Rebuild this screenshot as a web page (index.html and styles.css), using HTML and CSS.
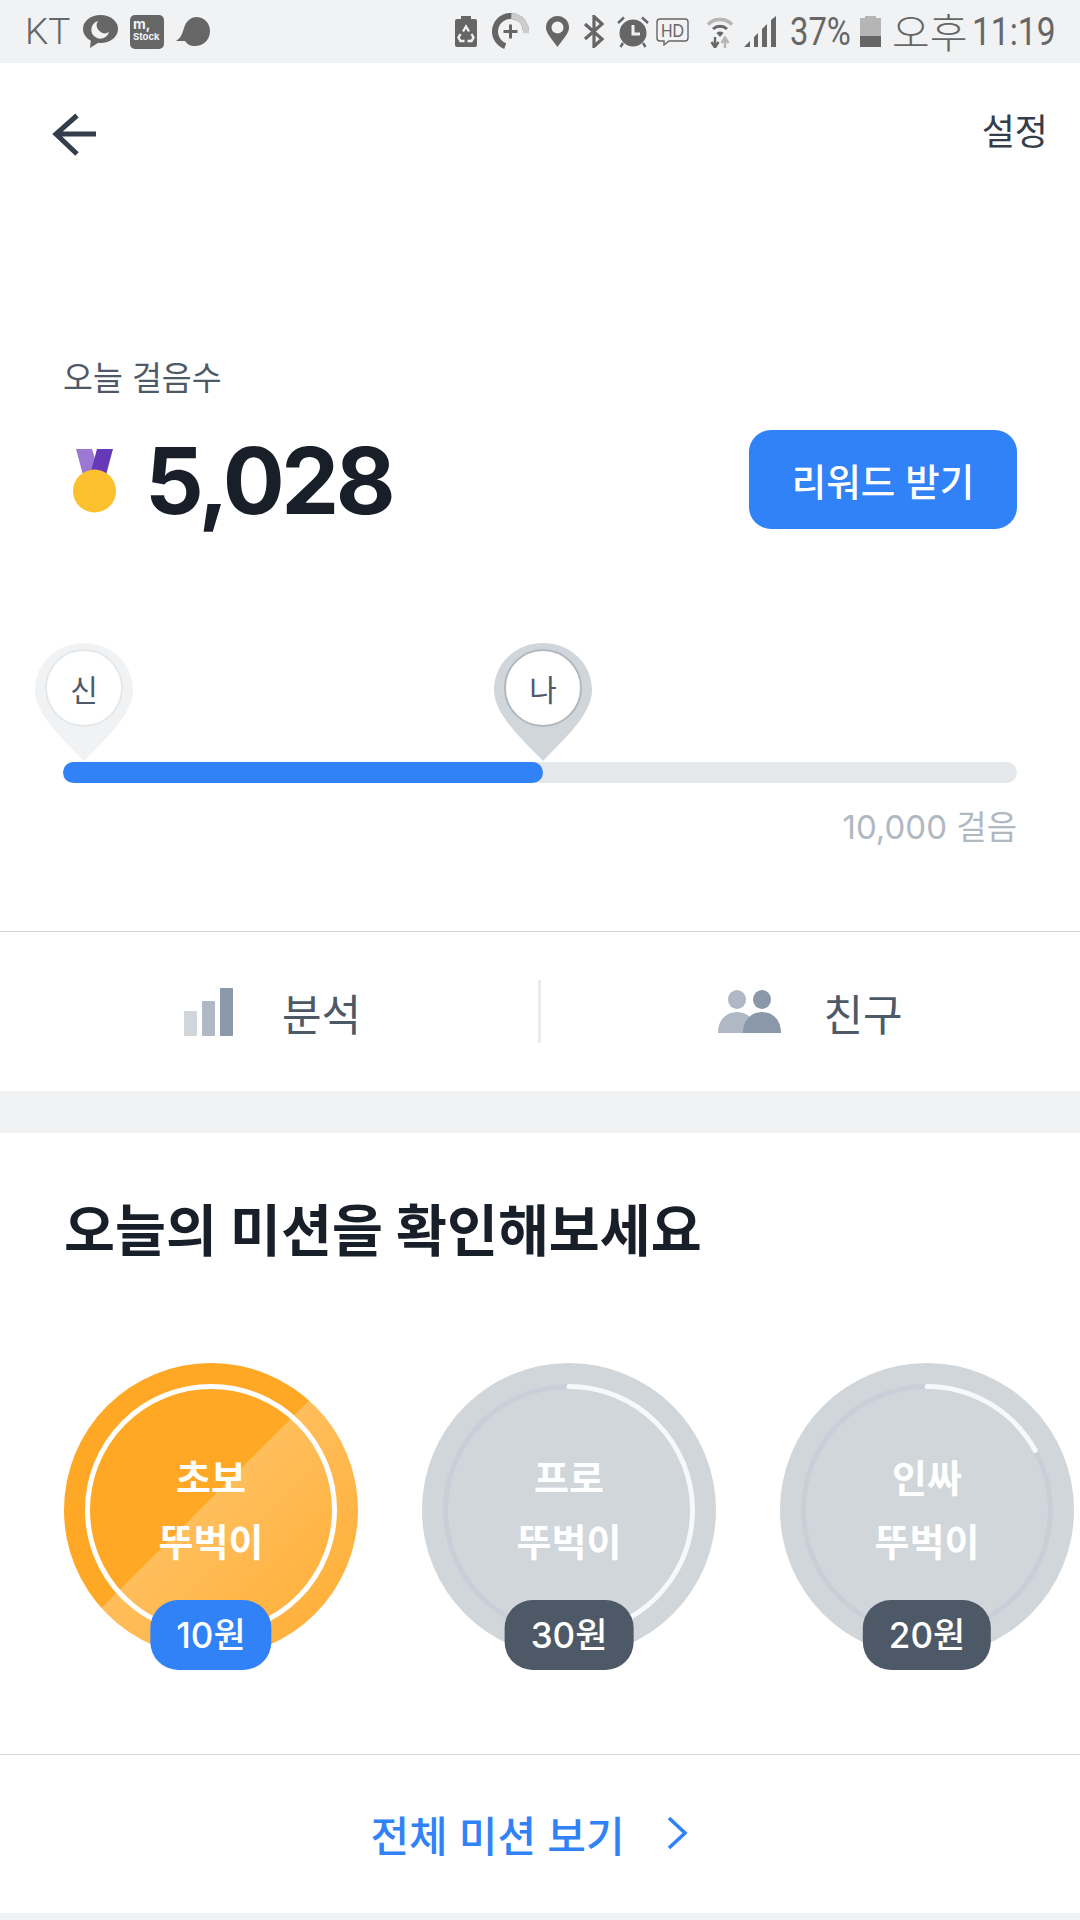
FILE: index.html
```html
<!DOCTYPE html>
<html lang='ko'>
<head>
  <meta charset='utf8'>
  <title>오늘 걸음수</title>
  <link rel="stylesheet" href="styles.css">
</head>
<body>
  <div class='status'>
    <div class='status-left'>
      <span class='carrier'>KT</span>
      <svg class='ico' width='35' height='33' viewBox='0 0 35 33'>
        <ellipse cx='17.5' cy='14' rx='17.5' ry='14' fill='#666'/>
        <path d='M8 24 L7 33 L18 26Z' fill='#666'/>
        <path d='M15 6 A9 9 0 1 0 26 17 A8 8 0 0 1 15 6Z' fill='#f1f2f4'/>
      </svg>
      <div class='mstock'><span class='mstock-m'>m,</span><span class='mstock-s'>Stock</span></div>
      <svg class='ico' width='34' height='29' viewBox='0 0 34 29'>
        <path d='M0 24 C5 21 6 17 8 11 C10 4 15 0 20 0 C28 0 34 6 34 14 C34 23 27 29 19 29 C14 29 11 27 9 24 C6 24 3 24 0 24Z' fill='#666'/>
      </svg>
    </div>
    <div class='status-right'>
      <svg class='ico' width='22' height='31' viewBox='0 0 22 31'>
        <path d='M6 0H16V3H20Q22 3 22 5V29Q22 31 20 31H2Q0 31 0 29V5Q0 3 2 3H6Z' fill='#666'/>
        <path d='M8 15.5L11 10.5L14 15.5M16.5 18L18.5 21.5L16.5 25H12.5M9.5 25H5.5L3.5 21.5L5.5 18' stroke='#f1f2f4' stroke-width='2.4' fill='none'/>
      </svg>
      <svg class='ico ico-plus' width='37' height='37' viewBox='0 0 37 37'>
        <circle cx='18.5' cy='18.5' r='15.5' fill='none' stroke='#666' stroke-width='6' pathLength='100' stroke-dasharray='69 31' transform='rotate(110 18.5 18.5)'/>
        <circle cx='18.5' cy='18.5' r='15.5' fill='none' stroke='#ccc' stroke-width='6' pathLength='100' stroke-dasharray='26 74' transform='rotate(-87 18.5 18.5)'/>
        <path d='M18.5 11.5V25.5M11.5 18.5H25.5' stroke='#666' stroke-width='3'/>
      </svg>
      <svg class='ico ico-loc' width='23' height='31' viewBox='0 0 23 31'>
        <path fill-rule='evenodd' d='M11.5 31C7 24 0 18 0 11.5A11.5 11.5 0 0 1 23 11.5C23 18 16 24 11.5 31ZM11.5 5.5A6 6 0 1 0 11.5 17.5A6 6 0 1 0 11.5 5.5Z' fill='#666'/>
      </svg>
      <svg class='ico ico-bt' width='22' height='33' viewBox='0 0 22 33'>
        <path d='M2 9L19 24L11 31.5V1.5L19 9L2 24' fill='none' stroke='#666' stroke-width='3.2'/>
      </svg>
      <svg class='ico ico-alarm' width='32' height='32' viewBox='0 0 32 32'>
        <circle cx='16' cy='17' r='13.5' fill='#666'/>
        <path d='M1 7L7 1.5M31 7L25 1.5M6 27L3.5 31M26 27L28.5 31' stroke='#666' stroke-width='2.4'/>
        <path d='M16 9V18H23' fill='none' stroke='#f1f2f4' stroke-width='3'/>
      </svg>
      <svg class='ico ico-hd' width='33' height='28' viewBox='0 0 33 28'>
        <path d='M4 1H29Q32 1 32 4V20Q32 23 29 23H13L8 27V23H4Q1 23 1 20V4Q1 1 4 1Z' fill='none' stroke='#666' stroke-width='1.4'/>
        <text x='5' y='19' class='hd-text' textLength='23' lengthAdjust='spacingAndGlyphs'>HD</text>
      </svg>
      <svg class='ico ico-wifi' width='28' height='33' viewBox='0 0 28 33'>
        <path d='M2 9.5A17 17 0 0 1 26 9.5' fill='none' stroke='#b5b5b5' stroke-width='3.4'/>
        <path d='M7 14A10.5 10.5 0 0 1 21 14' fill='none' stroke='#666' stroke-width='3'/>
        <path d='M10.5 18A5 5 0 0 1 17.5 18L14 22Z' fill='#666'/>
        <path d='M9 22V31M5.5 27L9 32.5L12.5 27' fill='none' stroke='#666' stroke-width='2.4'/>
        <path d='M19 33V24M15.5 28L19 22.5L22.5 28' fill='none' stroke='#b5b5b5' stroke-width='2.4'/>
      </svg>
      <svg class='ico ico-signal' width='32' height='31' viewBox='0 0 32 31'>
        <path d='M0 31L6 25V31ZM10 31V21L14 17V31ZM18 31V13L23 8V31ZM27 31V4L32 0V31Z' fill='#666'/>
      </svg>
      <span class='batt-text'><span class='squeeze squeeze-batt'>37%</span></span>
      <svg class='ico ico-batt' width='21' height='31' viewBox='0 0 21 31'>
        <path d='M5 0H16V2H21V31H0V2H5Z' fill='#b5b5b5'/>
        <rect y='20' width='21' height='11' fill='#666'/>
      </svg>
      <span class='ampm'>오후</span>
      <span class='clock'><span class='squeeze'>11:19</span></span>
    </div>
  </div>

  <div class='nav'>
    <svg width='48' height='46' viewBox='0 0 48 46'>
      <path d='M46 23H6M27 4.5L6 23L27 43' fill='none' stroke='#333d4b' stroke-width='5'/>
    </svg>
    <a class='nav-link'>설정</a>
  </div>

  <section class='today'>
    <div class='today-label'>오늘 걸음수</div>
    <div class='today-row'>
      <div class='today-count'>
        <svg class='medal' width='44' height='64' viewBox='0 0 44 64'>
          <path d='M3 0H19L27 26H10Z' fill='#9b78d2'/>
          <path d='M24 0H40L33 26H17Z' fill='#6539b8'/>
          <circle cx='21.5' cy='42' r='21.5' fill='#fdc02f'/>
        </svg>
        <span class='count'>5,028</span>
      </div>
      <button class='reward'>리워드 받기</button>
    </div>
    <div class='track'>
      <div class='track-fill'></div>
      <div class='pin pin-start'>
        <svg width='98' height='118' viewBox='0 0 98 118'>
          <path d='M49 118C30 98 0 72 0 47C0 20 22 0 49 0C76 0 98 20 98 47C98 72 68 98 49 118Z'/>
        </svg>
        <span class='pin-face'>신</span>
      </div>
      <div class='pin pin-mid'>
        <svg width='98' height='118' viewBox='0 0 98 118'>
          <path d='M49 118C30 98 0 72 0 47C0 20 22 0 49 0C76 0 98 20 98 47C98 72 68 98 49 118Z'/>
        </svg>
        <span class='pin-face'>나</span>
      </div>
    </div>
    <div class='goal'>10,000 걸음</div>
  </section>

  <div class='tabs'>
    <a class='tab tab-stats'>
      <span class='bars'>
        <i class='bar bar-1'></i>
        <i class='bar bar-2'></i>
        <i class='bar bar-3'></i>
      </span>
      <span>분석</span>
    </a>
    <a class='tab tab-friends'>
      <svg width='63' height='43' viewBox='0 0 63 43'>
        <ellipse cx='19' cy='9.5' rx='9' ry='9.5' fill='#b0b8c6'/>
        <path d='M0 43C0 30 8 22 19 22C30 22 38 30 38 43Z' fill='#b0b8c6'/>
        <ellipse cx='44' cy='9.5' rx='9' ry='9.5' fill='#8b98aa'/>
        <path d='M25 43C25 30 33 22 44 22C55 22 63 30 63 43Z' fill='#8b98aa'/>
      </svg>
      <span>친구</span>
    </a>
  </div>

  <div class='band'></div>

  <section class='missions'>
    <h2>오늘의 미션을 확인해보세요</h2>
    <div class='mission-row'>
      <div class='mission mission-on'>
        <svg class='ring' viewBox='0 0 294 294'>
          <circle cx='147' cy='147' r='123.5' fill='none' stroke='#fff' stroke-width='5'/>
        </svg>
        <div class='mission-name'>초보<br>뚜벅이</div>
        <span class='prize prize-on'>10원</span>
      </div>
      <div class='mission'>
        <svg class='ring' viewBox='0 0 294 294'>
          <circle cx='147' cy='147' r='123.5' fill='none' stroke='#c8cfd9' stroke-width='5'/>
          <circle cx='147' cy='147' r='123.5' fill='none' stroke='#f7f8f9' stroke-width='5' stroke-linecap='round' pathLength='100' stroke-dasharray='44 56' transform='rotate(-90 147 147)'/>
        </svg>
        <div class='mission-name'>프로<br>뚜벅이</div>
        <span class='prize'>30원</span>
      </div>
      <div class='mission'>
        <svg class='ring' viewBox='0 0 294 294'>
          <circle cx='147' cy='147' r='123.5' fill='none' stroke='#c8cfd9' stroke-width='5'/>
          <circle cx='147' cy='147' r='123.5' fill='none' stroke='#f7f8f9' stroke-width='5' stroke-linecap='round' pathLength='100' stroke-dasharray='17 83' transform='rotate(-90 147 147)'/>
        </svg>
        <div class='mission-name'>인싸<br>뚜벅이</div>
        <span class='prize'>20원</span>
      </div>
    </div>
  </section>

  <a class='more'>
    <span>전체 미션 보기</span>
    <svg width='21' height='34' viewBox='0 0 21 34'>
      <path d='M2 2L18 17L2 32' fill='none' stroke='#3182f6' stroke-width='3.6'/>
    </svg>
  </a>
  <div class='band-end'></div>
</body>
</html>
```

FILE: styles.css
```css
html, body {
  margin: 0;
  padding: 0;
  background: white;
}
body {
  width: 1080px;
  height: 1920px;
  overflow: hidden;
  font-family: Inter, "Noto Sans CJK KR", sans-serif;
  color: #333d4b;
}
svg {
  display: block;
  flex-shrink: 0;
}

/* status bar */
.status {
  height: 63px;
  background: #f1f2f4;
  display: flex;
  align-items: center;
  justify-content: space-between;
  padding: 0 26px 0 25px;
  color: #666;
  font-family: Roboto, "Noto Sans CJK KR", sans-serif;
  font-weight: 300;
}
.status-left, .status-right {
  display: flex;
  align-items: center;
}
.carrier {
  font-size: 37px;
  margin-right: 17px;
  width: 41px;
}
.mstock {
  width: 34px;
  height: 34px;
  margin: 0 12px;
  background: #666;
  border-radius: 5px;
  color: #f1f2f4;
  font-family: Inter, sans-serif;
  font-weight: 700;
  display: flex;
  flex-direction: column;
  padding-left: 3px;
  box-sizing: border-box;
}
.mstock-m {
  font-size: 14px;
  line-height: 14px;
  margin-top: 2px;
}
.mstock-s {
  font-size: 9.5px;
  line-height: 12px;
}
.ico-plus { margin-left: 15px; }
.ico-loc { margin-left: 17px; }
.ico-bt { margin-left: 14px; }
.ico-alarm { margin-left: 12px; }
.ico-hd { margin-left: 7px; }
.ico-wifi { margin-left: 17px; }
.ico-signal { margin-left: 10px; }
.hd-text {
  font-family: "Liberation Sans", sans-serif;
  font-size: 19px;
  fill: #666;
}
.squeeze {
  display: inline-block;
  transform: scaleX(0.86);
  transform-origin: left center;
  white-space: nowrap;
  font-weight: 400;
}
.squeeze-batt {
  transform: scaleX(0.84);
}
.batt-text {
  font-size: 39px;
  width: 58px;
  margin-left: 14px;
}
.ico-batt { margin-left: 12px; }
.ampm {
  font-size: 41px;
  line-height: 44px;
  margin: 4px 0 0 11px;
  width: 72px;
  white-space: nowrap;
}
.clock {
  font-size: 39px;
  margin-left: 8px;
  width: 82px;
}

/* nav */
.nav {
  height: 142px;
  display: flex;
  align-items: center;
  justify-content: space-between;
  padding: 0 32px 0 50px;
}
.nav-link {
  font-size: 36px;
  line-height: 46px;
  margin-top: -5px;
  color: #333d4b;
}

/* today */
.today {
  height: 727px;
  padding: 0 63px;
  box-sizing: border-box;
  border-bottom: 1px solid #d1d6db;
  width: 1080px;
}
.today-label {
  padding-top: 154px;
  font-size: 32.5px;
  line-height: 40px;
  color: #4e5968;
}
.today-row {
  display: flex;
  justify-content: space-between;
  align-items: center;
  margin-top: 28px;
}
.today-count {
  display: flex;
  align-items: center;
  gap: 28px;
  padding-left: 10px;
}
.medal {
  margin-top: 4px;
}
.count {
  padding-top: 4px;
  font-size: 92px;
  font-weight: 700;
  color: #191f28;
  line-height: 100px;
  letter-spacing: -3.5px;
}
.reward {
  width: 268px;
  height: 99px;
  border: 0;
  border-radius: 22px;
  background: #3182f6;
  color: white;
  font-family: inherit;
  font-size: 37.5px;
  font-weight: 500;
}
.track {
  position: relative;
  margin-top: 231px;
  height: 21px;
  border-radius: 11px;
  background: #e5e8eb;
}
.track-fill {
  width: 480px;
  height: 100%;
  border-radius: 11px;
  background: #3182f6;
}
.pin {
  position: absolute;
  bottom: 22px;
  width: 98px;
  height: 118px;
}
.pin-start { left: -28px; fill: #f1f2f4; }
.pin-mid { left: 431px; fill: #d1d6db; }
.pin-face {
  position: absolute;
  left: 10px;
  top: 6px;
  width: 78px;
  height: 78px;
  box-sizing: border-box;
  border-radius: 50%;
  background: white;
  border: 2px solid #e5e8eb;
  display: flex;
  align-items: center;
  justify-content: center;
  font-size: 30px;
  color: #4e5968;
}
.pin-mid .pin-face { border-color: #b0b8c1; }
.goal {
  margin-top: 24px;
  text-align: right;
  font-size: 33px;
  line-height: 40px;
  color: #b0b8c1;
}

/* tabs */
.tabs {
  height: 159px;
  display: flex;
  align-items: center;
}
.tab {
  height: 63px;
  display: flex;
  align-items: center;
  justify-content: center;
  gap: 49px;
  font-size: 43px;
  color: #4e5968;
}
.tab-stats {
  width: 538px;
  box-sizing: border-box;
  padding-left: 7px;
}
.tab-friends {
  flex: 1;
  gap: 42px;
  border-left: 3px solid #e9ebee;
}
.bars {
  display: flex;
  align-items: flex-end;
  gap: 5px;
  height: 48px;
}
.bar {
  width: 13px;
  border-radius: 1px;
}
.bar-1 { height: 25px; background: #d1d6db; }
.bar-2 { height: 35px; background: #b0b8c6; }
.bar-3 { height: 48px; background: #8b98aa; }

.band {
  height: 42px;
  background: #f1f2f4;
}

/* missions */
.missions {
  height: 621px;
  overflow: hidden;
  padding-left: 64px;
}
.missions h2 {
  margin: 0;
  padding-top: 63px;
  font-size: 55.4px;
  line-height: 70px;
  font-weight: 700;
  color: #191f28;
}
.mission-row {
  display: flex;
  gap: 64px;
  margin-top: 97px;
}
.mission {
  position: relative;
  width: 294px;
  height: 294px;
  flex-shrink: 0;
  border-radius: 50%;
  background: #d1d6db;
  display: flex;
  align-items: center;
  justify-content: center;
}
.mission-on {
  background: linear-gradient(135deg, #ffa826 48.1%, #ffbe5c 48.1%, #ffac30 100%);
}
.ring {
  position: absolute;
  left: 0;
  top: 0;
  width: 294px;
  height: 294px;
}
.mission-name {
  position: relative;
  text-align: center;
  font-size: 38px;
  line-height: 64px;
  font-weight: 700;
  color: white;
}
.prize {
  position: absolute;
  left: 50%;
  bottom: -13px;
  transform: translateX(-50%);
  height: 70px;
  padding: 0 26px;
  border-radius: 28px;
  background: #4e5968;
  color: white;
  font-size: 35px;
  font-weight: 500;
  line-height: 70px;
  white-space: nowrap;
}
.prize-on { background: #3182f6; }

/* more link */
.more {
  height: 159px;
  border-top: 1px solid #d1d6db;
  box-sizing: border-box;
  display: flex;
  align-items: center;
  justify-content: center;
  gap: 42px;
  padding: 0 22px 2px 0;
  font-size: 42px;
  font-weight: 500;
  color: #3182f6;
}
.band-end {
  height: 7px;
  background: #f1f2f4;
}
```
